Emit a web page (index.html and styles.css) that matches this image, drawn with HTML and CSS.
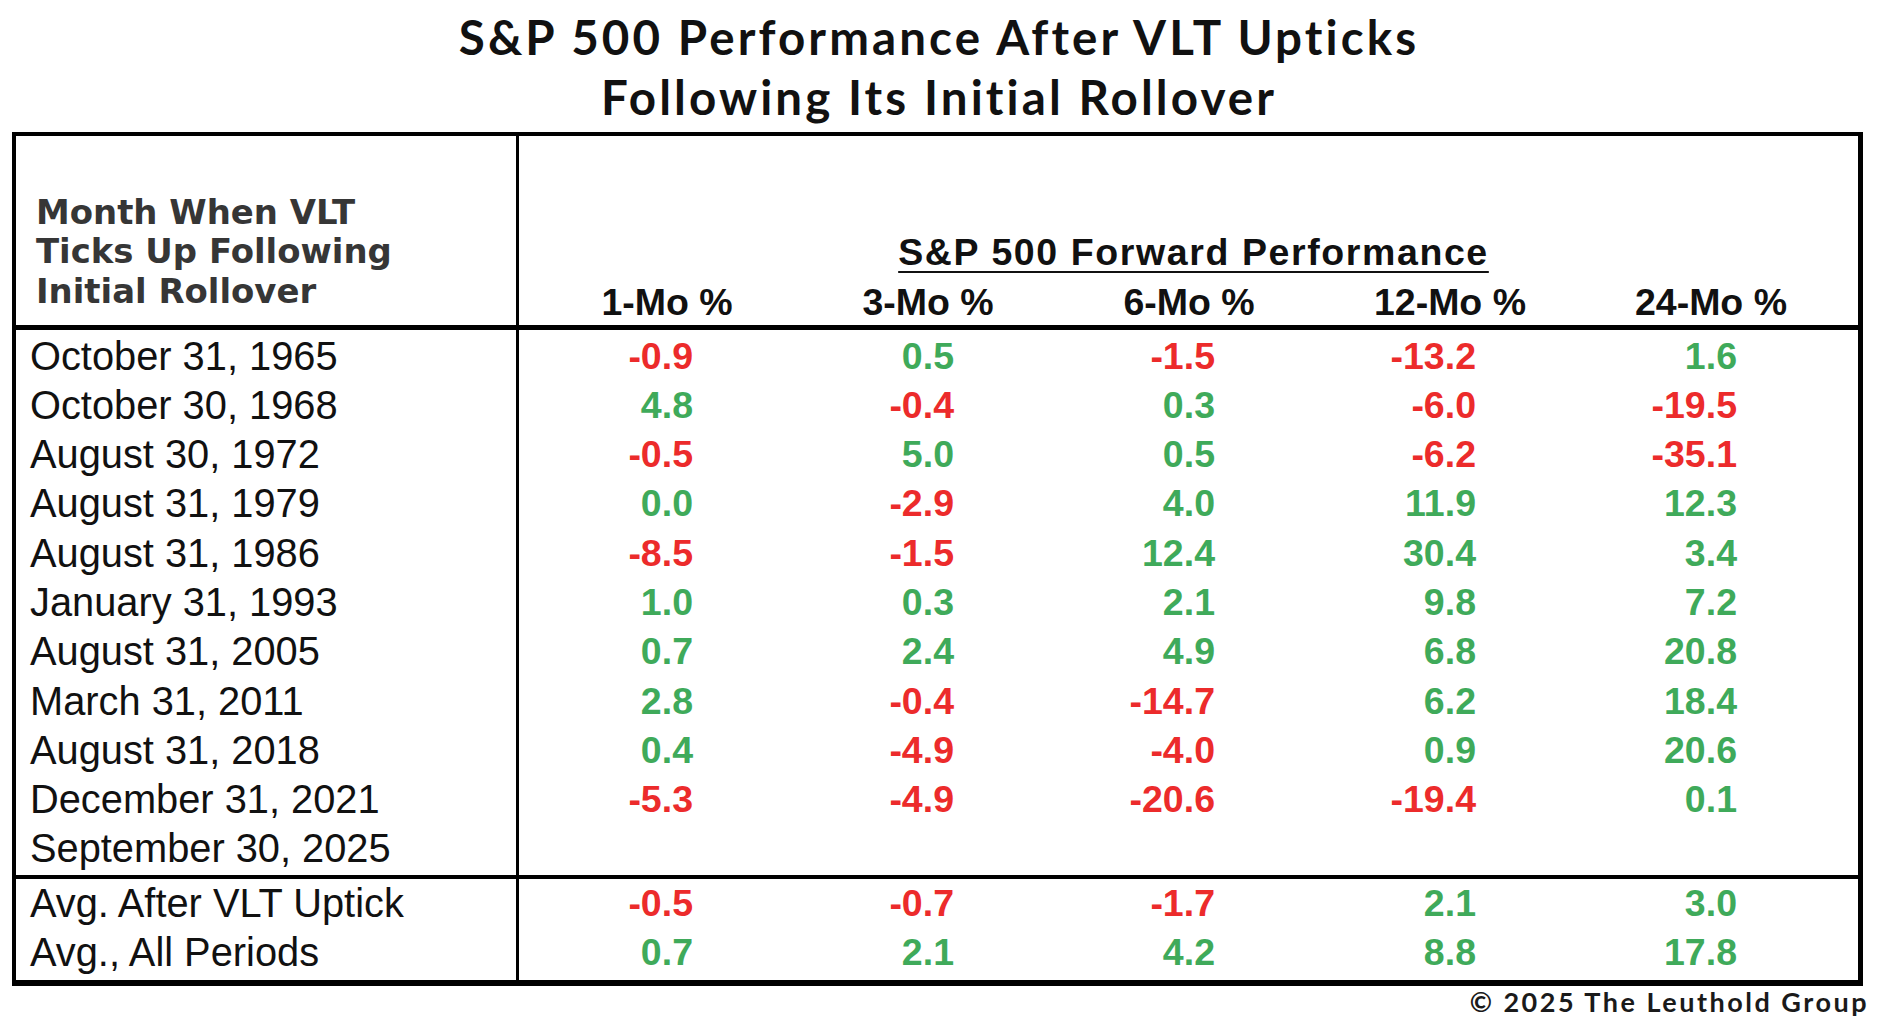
FILE: index.html
```html
<!DOCTYPE html>
<html lang="en">
<head>
<meta charset="utf-8">
<title>S&amp;P 500 Performance After VLT Upticks</title>
<link rel="stylesheet" href="styles.css">
</head>
<body>
<div class="page">
  <h1 class="title">S&amp;P 500 Performance After VLT Upticks<br>Following Its Initial Rollover</h1>
  <div class="table">
    <div class="sec sec-head">
      <div class="left head-left">
        <div>Month When VLT</div>
        <div>Ticks Up Following</div>
        <div>Initial Rollover</div>
      </div>
      <div class="right head-right">
        <div class="group-title"><span>S&amp;P 500 Forward Performance</span></div>
        <div class="cols">
          <span>1-Mo %</span><span>3-Mo %</span><span>6-Mo %</span><span>12-Mo %</span><span>24-Mo %</span>
        </div>
      </div>
    </div>
    <div class="sec sec-data">
      <div class="left labels">
        <div>October 31, 1965</div>
        <div>October 30, 1968</div>
        <div>August 30, 1972</div>
        <div>August 31, 1979</div>
        <div>August 31, 1986</div>
        <div>January 31, 1993</div>
        <div>August 31, 2005</div>
        <div>March 31, 2011</div>
        <div>August 31, 2018</div>
        <div>December 31, 2021</div>
        <div>September 30, 2025</div>
      </div>
      <div class="right vals">
        <span class="neg">-0.9</span><span class="pos">0.5</span><span class="neg">-1.5</span><span class="neg">-13.2</span><span class="pos">1.6</span>
        <span class="pos">4.8</span><span class="neg">-0.4</span><span class="pos">0.3</span><span class="neg">-6.0</span><span class="neg">-19.5</span>
        <span class="neg">-0.5</span><span class="pos">5.0</span><span class="pos">0.5</span><span class="neg">-6.2</span><span class="neg">-35.1</span>
        <span class="pos">0.0</span><span class="neg">-2.9</span><span class="pos">4.0</span><span class="pos">11.9</span><span class="pos">12.3</span>
        <span class="neg">-8.5</span><span class="neg">-1.5</span><span class="pos">12.4</span><span class="pos">30.4</span><span class="pos">3.4</span>
        <span class="pos">1.0</span><span class="pos">0.3</span><span class="pos">2.1</span><span class="pos">9.8</span><span class="pos">7.2</span>
        <span class="pos">0.7</span><span class="pos">2.4</span><span class="pos">4.9</span><span class="pos">6.8</span><span class="pos">20.8</span>
        <span class="pos">2.8</span><span class="neg">-0.4</span><span class="neg">-14.7</span><span class="pos">6.2</span><span class="pos">18.4</span>
        <span class="pos">0.4</span><span class="neg">-4.9</span><span class="neg">-4.0</span><span class="pos">0.9</span><span class="pos">20.6</span>
        <span class="neg">-5.3</span><span class="neg">-4.9</span><span class="neg">-20.6</span><span class="neg">-19.4</span><span class="pos">0.1</span>
      </div>
    </div>
    <div class="sec sec-avg">
      <div class="left labels">
        <div>Avg. After VLT Uptick</div>
        <div>Avg., All Periods</div>
      </div>
      <div class="right vals">
        <span class="neg">-0.5</span><span class="neg">-0.7</span><span class="neg">-1.7</span><span class="pos">2.1</span><span class="pos">3.0</span>
        <span class="pos">0.7</span><span class="pos">2.1</span><span class="pos">4.2</span><span class="pos">8.8</span><span class="pos">17.8</span>
      </div>
    </div>
  </div>
  <div class="credit">© 2025 The Leuthold Group</div>
</div>
</body>
</html>
```
FILE: styles.css
```css
* {
  box-sizing: border-box;
}

body {
  margin: 0;
  background: #ffffff;
}

.page {
  width: 1878px;
  padding-top: 7px;
}

.title {
  margin: 0;
  text-align: center;
  font-family: "Lato", "Open Sans", sans-serif;
  font-weight: 700;
  font-size: 47.5px;
  line-height: 60px;
  letter-spacing: 3.1px;
  color: #111111;
}

.table {
  margin: 5px 0 0 12px;
  width: 1851px;
  border-style: solid;
  border-color: #000000;
  border-width: 4px 5px 6px 4px;
}

.sec {
  display: grid;
  grid-template-columns: 503px 1fr;
}

.sec-head {
  height: 194px;
  border-bottom: 5px solid #000000;
}

.sec-data {
  height: 549px;
  border-bottom: 4px solid #000000;
}

.sec-avg {
  height: 101px;
}

.left {
  border-right: 3px solid #000000;
  padding-left: 14px;
}

.head-left {
  display: flex;
  flex-direction: column;
  justify-content: flex-end;
  padding-left: 20px;
  padding-bottom: 14px;
  font-family: "DejaVu Sans", Verdana, sans-serif;
  font-weight: 700;
  font-size: 33.9px;
  line-height: 39.5px;
  color: #363636;
  white-space: nowrap;
}

.head-right {
  display: flex;
  flex-direction: column;
  justify-content: flex-end;
  padding-bottom: 3px;
  font-family: "Liberation Sans", Arial, sans-serif;
  color: #111111;
}

.group-title {
  text-align: center;
  padding-left: 10px;
  margin-bottom: 10px;
  font-weight: 700;
  font-size: 37.5px;
  line-height: 40px;
  letter-spacing: 1.6px;
}

.group-title span {
  text-decoration: underline;
  text-decoration-thickness: 2px;
  text-underline-offset: 6px;
}

.cols {
  display: grid;
  grid-template-columns: repeat(5, 261px);
  font-weight: 700;
  font-size: 37.5px;
  line-height: 40px;
}

.cols span {
  text-align: center;
  padding-left: 35px;
  white-space: nowrap;
}

.labels {
  font-family: "Liberation Sans", Arial, sans-serif;
  font-size: 39.8px;
  line-height: 49.3px;
  color: #111111;
  white-space: nowrap;
}

.sec-data .labels,
.sec-data .vals {
  padding-top: 1.5px;
}

.sec-avg .labels div,
.sec-avg .vals span {
  height: 48.5px;
  line-height: 48.5px;
}

.vals {
  display: grid;
  grid-template-columns: repeat(5, 261px);
  grid-auto-rows: 49.3px;
  align-content: start;
  font-family: "Liberation Sans", Arial, sans-serif;
  font-weight: 700;
  font-size: 37.5px;
  line-height: 49.3px;
}

.vals span {
  text-align: right;
  padding-right: 87px;
}

.sec-avg .vals {
  grid-auto-rows: 48.5px;
}

.neg {
  color: #ec2b2b;
}

.pos {
  color: #3faa5a;
}

.credit {
  margin-top: 1px;
  padding-right: 9px;
  text-align: right;
  font-family: "Lato", "Open Sans", sans-serif;
  font-weight: 700;
  font-size: 27px;
  line-height: 30px;
  letter-spacing: 2.5px;
  color: #1a1a1a;
}
```
